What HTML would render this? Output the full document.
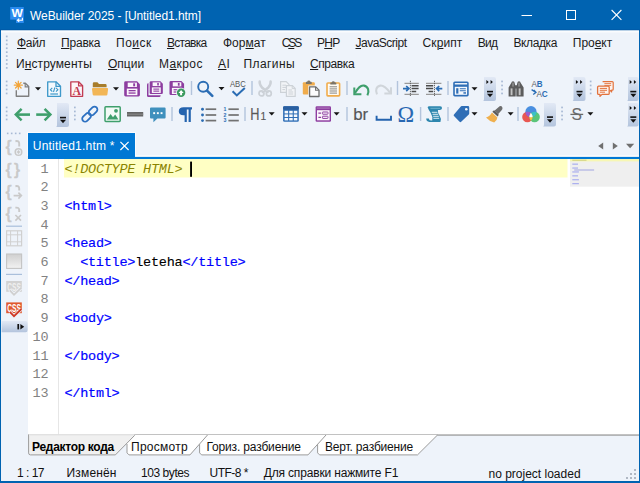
<!DOCTYPE html>
<html><head><meta charset="utf-8"><title>WeBuilder 2025 - [Untitled1.htm]</title>
<style>
html,body{margin:0;padding:0}
body{width:640px;height:483px;position:relative;overflow:hidden;background:#eef3fa}
#w{position:absolute;left:0;top:0;width:640px;height:483px;overflow:hidden}
#w div{position:absolute}
#w .t{white-space:pre;line-height:1}
#w u{text-decoration:underline;text-underline-offset:1px;text-decoration-thickness:1px}
svg{position:absolute;left:0;top:0}
</style></head><body><div id="w">
<svg width="640" height="483" viewBox="0 0 640 483">
<rect x="0" y="0" width="640" height="483" fill="#0063b1"/>
<rect x="1" y="30" width="638" height="451" fill="#eef3fa"/>
<rect x="0" y="0" width="640" height="30" fill="#0063b1"/>
<rect x="0" y="29.5" width="640" height="1" fill="#0057a3"/>
<rect x="1" y="30.5" width="638" height="2" fill="#fafcfe"/>
<rect x="27" y="132" width="109" height="24" fill="#f9fbfe"/>
<rect x="28" y="133" width="107" height="25" fill="#0078d4"/>
<rect x="135" y="155.2" width="504" height="1.8" fill="#fafcfe"/>
<rect x="28" y="156.9" width="611" height="2.1" fill="#0078d4"/>
<rect x="28" y="159" width="611" height="276" fill="#fff"/>
<rect x="58" y="159" width="1" height="276" fill="#e6e6e6"/>
<rect x="64" y="159" width="503.5" height="18.5" fill="#ffffc4"/>
<rect x="570" y="159" width="69" height="27.7" fill="#efefef"/>
<rect x="570" y="159" width="69" height="2.4" fill="#f7f7b4"/>
<rect x="190.1" y="161.6" width="1.9" height="15.2" fill="#000"/>
<defs>
<linearGradient id="ov" x1="0" y1="0" x2="0" y2="1"><stop offset="0" stop-color="#e2e9f5"/><stop offset="1" stop-color="#b3c4dd"/></linearGradient>
<linearGradient id="sq" x1="0" y1="0" x2="0" y2="1"><stop offset="0" stop-color="#cfcfcf"/><stop offset="1" stop-color="#f2f2f2"/></linearGradient>
</defs>
<rect x="5.9" y="35.60" width="1.7" height="1.7" fill="#a7b9d4"/>
<rect x="5.9" y="39.53" width="1.7" height="1.7" fill="#a7b9d4"/>
<rect x="5.9" y="43.46" width="1.7" height="1.7" fill="#a7b9d4"/>
<rect x="5.9" y="47.39" width="1.7" height="1.7" fill="#a7b9d4"/>
<rect x="5.9" y="51.32" width="1.7" height="1.7" fill="#a7b9d4"/>
<rect x="5.9" y="55.25" width="1.7" height="1.7" fill="#a7b9d4"/>
<rect x="5.9" y="59.18" width="1.7" height="1.7" fill="#a7b9d4"/>
<rect x="5.9" y="63.11" width="1.7" height="1.7" fill="#a7b9d4"/>
<rect x="5.9" y="67.04" width="1.7" height="1.7" fill="#a7b9d4"/>
<rect x="5.8" y="80.6" width="1.7" height="1.7" fill="#a7b9d4"/>
<rect x="5.8" y="84.6" width="1.7" height="1.7" fill="#a7b9d4"/>
<rect x="5.8" y="88.6" width="1.7" height="1.7" fill="#a7b9d4"/>
<rect x="5.8" y="92.6" width="1.7" height="1.7" fill="#a7b9d4"/>
<g transform="translate(14 81)"><path d="M9.3 2.3H11.4L14.7 5.6V15.2H2.3V9.3" fill="none" stroke="#808080" stroke-width="1.4" stroke-linejoin="round"/>
<path d="M11.2 2.5V5.8H14.5" fill="none" stroke="#808080" stroke-width="1.2"/>
<path d="M4.3 0.2V8.2M0.3 4.2H8.3M1.5 1.4L7.1 7M7.1 1.4L1.5 7" stroke="#f2a53a" stroke-width="1.25" stroke-linecap="round"/></g>
<path d="M35 87.2h6l-3 3.2z" fill="#151515"/>
<g transform="translate(46 81)"><path d="M1.7 0.8H10L14.5 5.3V15.3H1.7Z" fill="#f3f9fd" stroke="#3f99ca" stroke-width="1.35" stroke-linejoin="round"/>
<path d="M10 0.8V5.3H14.5" fill="none" stroke="#3c97c9" stroke-width="1.3"/>
<path d="M6.3 6.8L4.4 8.7L6.3 10.6M10 6.8L11.9 8.7L10 10.6M8.9 6.4L7.5 11" stroke="#3c97c9" stroke-width="1.1" fill="none"/>
<path d="M4.3 13H12" stroke="#3c97c9" stroke-width="1.2"/></g>
<g transform="translate(69 81)"><path d="M1.8 0.8H9.6L13.6 4.8V15.3H1.8Z" fill="#fdf6f7" stroke="#c23c52" stroke-width="1.35" stroke-linejoin="round"/>
<path d="M9.6 0.8V4.8H13.6" fill="none" stroke="#c23c52" stroke-width="1.3"/>
<text x="7.7" y="13.6" font-family="'Liberation Serif',serif" font-weight="bold" font-size="11.8" fill="#c23c52" text-anchor="middle">A</text></g>
<g transform="translate(92 81)"><path d="M0.8 2.4Q0.8 1.2 2 1.2H5.4L7 3H13.4Q14.6 3 14.6 4.2V6.2H0.8Z" fill="#a77d2b"/>
<path d="M0 7.9Q-0.1 6.9 1 6.9H15.1Q16.2 6.9 16.1 7.9L15.4 13.6Q15.3 14.6 14.2 14.6H1.9Q0.8 14.6 0.7 13.6Z" fill="#f2b656"/></g>
<path d="M113 87.2h6l-3 3.2z" fill="#151515"/>
<g transform="translate(124 81)"><g transform="scale(1.0)"><path d="M1.6 0.3H13L15.9 3.2V14Q15.9 15.4 14.5 15.4H1.6Q0.2 15.4 0.2 14V1.7Q0.2 0.3 1.6 0.3Z" fill="#8d3da0"/>
<rect x="3.7" y="1.6" width="9.2" height="4.4" fill="#fbf5fc"/><rect x="9.2" y="2.3" width="1.9" height="3" fill="#8d3da0"/>
<rect x="2.8" y="7.6" width="10.6" height="6.6" fill="#fbf5fc"/><rect x="4.6" y="9" width="7" height="1.3" fill="#8d3da0"/><rect x="4.6" y="11.4" width="7" height="1.3" fill="#8d3da0"/></g></g>
<g transform="translate(147 81)"><rect x="0" y="2.2" width="13.6" height="13.9" rx="1.4" fill="#8d3da0"/><path d="M2.4 0.2H14L15.8 2V13.4H2.4Z" fill="#eef3fa" stroke="#eef3fa" stroke-width="1.8"/><g transform="translate(2.5 0)"><g transform="scale(0.84)"><path d="M1.6 0.3H13L15.9 3.2V14Q15.9 15.4 14.5 15.4H1.6Q0.2 15.4 0.2 14V1.7Q0.2 0.3 1.6 0.3Z" fill="#8d3da0"/>
<rect x="3.7" y="1.6" width="9.2" height="4.4" fill="#fbf5fc"/><rect x="9.2" y="2.3" width="1.9" height="3" fill="#8d3da0"/>
<rect x="2.8" y="7.6" width="10.6" height="6.6" fill="#fbf5fc"/><rect x="4.6" y="9" width="7" height="1.3" fill="#8d3da0"/><rect x="4.6" y="11.4" width="7" height="1.3" fill="#8d3da0"/></g></g></g>
<g transform="translate(169.3 80.8)"><g transform="scale(0.93)"><path d="M1.6 0.3H13L15.9 3.2V14Q15.9 15.4 14.5 15.4H1.6Q0.2 15.4 0.2 14V1.7Q0.2 0.3 1.6 0.3Z" fill="#8d3da0"/>
<rect x="3.7" y="1.6" width="9.2" height="4.4" fill="#fbf5fc"/><rect x="9.2" y="2.3" width="1.9" height="3" fill="#8d3da0"/>
<rect x="2.8" y="7.6" width="10.6" height="6.6" fill="#fbf5fc"/><rect x="4.6" y="9" width="7" height="1.3" fill="#8d3da0"/><rect x="4.6" y="11.4" width="7" height="1.3" fill="#8d3da0"/></g><circle cx="11.8" cy="11.9" r="5" fill="#eef3fa"/><circle cx="11.8" cy="11.9" r="4.2" fill="#3a9a5e"/><path d="M11.8 9.2L14.4 12.1H12.8V14.4H10.8V12.1H9.2Z" fill="#fff"/></g>
<rect x="190.8" y="81" width="1.4" height="14" fill="#b3c4dc"/>
<circle cx="203.2" cy="86.7" r="5" fill="none" stroke="#2b6db4" stroke-width="1.9"/><path d="M207 90.6L212.3 95.9" stroke="#2b6db4" stroke-width="2.6" stroke-linecap="round"/>
<path d="M218.5 87h6l-3 3.2z" fill="#151515"/>
<text x="230" y="86.9" font-family="'Liberation Sans',sans-serif" font-size="8.3" fill="#555" textLength="15.8" lengthAdjust="spacingAndGlyphs">ABC</text>
<path d="M232.6 91.3L236.8 95.4L244.8 87.9" fill="none" stroke="#2b6db4" stroke-width="2.1"/>
<rect x="251.3" y="81" width="1.4" height="14" fill="#b3c4dc"/>
<g transform="translate(257 81)"><circle cx="4.5" cy="12.4" r="2.5" fill="none" stroke="#ccd1d7" stroke-width="1.7"/><circle cx="11.8" cy="12.4" r="2.5" fill="none" stroke="#ccd1d7" stroke-width="1.7"/>
<path d="M2.7 0.4Q2.2 3 5 6.5L10.6 11M13.6 0.4Q14.1 3 11.3 6.5L5.7 11" fill="none" stroke="#ccd1d7" stroke-width="2.5" stroke-linecap="round"/></g>
<g transform="translate(280 81)"><path d="M0.6 0.6H6.2L9 3.4V11.4H0.6Z" fill="#f2f4f7" stroke="#cdd2d7" stroke-width="1.2"/>
<path d="M2.4 4.2H6M2.4 6.4H7M2.4 8.6H5" stroke="#cdd2d7" stroke-width="1"/>
<path d="M6.4 4.6H12.4L15.2 7.4V15.4H6.4Z" fill="#f2f4f7" stroke="#cdd2d7" stroke-width="1.2"/>
<path d="M12.2 4.8V7.6H15M8.4 9H12M8.4 11H13.2M8.4 13H13.2" fill="none" stroke="#cdd2d7" stroke-width="1"/></g>
<g transform="translate(302.6 80.5)"><rect x="0.2" y="1.7" width="12" height="12.2" rx="1" fill="#f0ac4c"/>
<path d="M3.3 3.4V1.7Q3.3 1.2 3.8 1.2H4.6Q4.8 -0.1 6.2 -0.1Q7.6 -0.1 7.8 1.2H8.6Q9.1 1.2 9.1 1.7V3.4Z" fill="#7b7468"/>
<path d="M7 6.4H13.2L16.4 9.6V16H7Z" fill="#fcfcfc" stroke="#eef3fa" stroke-width="2.6"/>
<path d="M7 6.4H13.2L16.4 9.6V16H7Z" fill="#fcfcfc" stroke="#6d6d6d" stroke-width="1.3" stroke-linejoin="round"/>
<path d="M13 6.6V9.8H16.2" fill="none" stroke="#6d6d6d" stroke-width="1.1"/></g>
<g transform="translate(325 81)"><rect x="2" y="2" width="12.6" height="12.9" rx="0.8" fill="#fffbf3" stroke="#f0ac4c" stroke-width="1.6"/>
<path d="M5.3 3.6V2Q5.3 1.5 5.8 1.5H6.7Q6.9 0.2 8.3 0.2Q9.7 0.2 9.9 1.5H10.8Q11.3 1.5 11.3 2V3.6Z" fill="#7b7468"/>
<path d="M4.6 5.8H12M4.6 7.9H12M4.6 10H12M4.6 12.1H12" stroke="#858585" stroke-width="1"/></g>
<rect x="346.3" y="81" width="1.4" height="14" fill="#b3c4dc"/>
<path d="M367.4 95.4C369.6 91 368.2 86.4 364 85.6C360.6 85 358.4 87.4 355 93" fill="none" stroke="#3f9f6c" stroke-width="2.1"/><path d="M354.3 87.4V94.3H361.4" fill="none" stroke="#3f9f6c" stroke-width="2"/>
<path d="M377 94.4C375 90.4 376.4 86.2 380.4 85.6C383.6 85.2 386 87.4 390 92.6" fill="none" stroke="#d0d5da" stroke-width="2.1"/><path d="M391 87.2V93.6H384.4" fill="none" stroke="#d0d5da" stroke-width="2"/>
<rect x="396.8" y="81" width="1.4" height="14" fill="#b3c4dc"/>
<path d="M404.5 83.3H418.8M404.5 94.3H418.8" stroke="#9a9a9a" stroke-width="1.3"/><path d="M411.6 85.8H418.6M411.6 88.6H418.6M411.6 91.4H416.2" stroke="#4a4a4a" stroke-width="1.5"/><path d="M410.4 80.8V96.6" stroke="#5a5a5a" stroke-width="0.9" stroke-dasharray="1.2 0.8"/>
<path d="M403 88.6H408.6M406.2 86L408.9 88.6L406.2 91.2" fill="none" stroke="#2b6db4" stroke-width="1.7"/>
<path d="M426 83.3H441.4M426 94.3H441.4" stroke="#9a9a9a" stroke-width="1.3"/><path d="M426 85.8H433.2M426 88.6H433.2M428.6 91.4H433.2" stroke="#4a4a4a" stroke-width="1.5"/><path d="M434.5 80.8V96.6" stroke="#5a5a5a" stroke-width="0.9" stroke-dasharray="1.2 0.8"/>
<path d="M442.3 88.6H436.8M439.2 86L436.5 88.6L439.2 91.2" fill="none" stroke="#2b6db4" stroke-width="1.7"/>
<rect x="447.3" y="81" width="1.4" height="14" fill="#b3c4dc"/>
<g transform="translate(453 81)"><rect x="0.2" y="0.4" width="15.5" height="15" rx="1.6" fill="#2f6eb6"/>
<rect x="1.8" y="2" width="12.3" height="1.5" fill="#eaf1fa"/>
<rect x="1.8" y="5.8" width="12.3" height="8" fill="#f4f8fd"/>
<rect x="3.2" y="7.2" width="2.2" height="5.4" fill="#2f6eb6"/><path d="M6.8 7.8H12.8M6.8 9.8H12.8" stroke="#2f6eb6" stroke-width="1.1"/><rect x="10.4" y="11.2" width="2.6" height="1.5" fill="#2f6eb6"/></g>
<path d="M471.5 87.2h6l-3 3.2z" fill="#151515"/>
<path d="M484 77H494Q496 77 496 79V99Q496 101 494 101H483.2Q484 100.5 484 99Z" fill="url(#ov)"/>
<path d="M486.4 80l2.3 2l-2.3 2zM490.6 80l2.3 2l-2.3 2z" fill="#111"/>
<rect x="487" y="90.8" width="6" height="1.6" fill="#111"/>
<path d="M487 93.8h6l-3 3.4z" fill="#111"/>
<rect x="501.2" y="80.6" width="1.7" height="1.7" fill="#a7b9d4"/>
<rect x="501.2" y="84.6" width="1.7" height="1.7" fill="#a7b9d4"/>
<rect x="501.2" y="88.6" width="1.7" height="1.7" fill="#a7b9d4"/>
<rect x="501.2" y="92.6" width="1.7" height="1.7" fill="#a7b9d4"/>
<g transform="translate(508 81)"><path d="M3.4 1.8Q3.4 0.2 5 0.2Q6.6 0.2 6.6 1.8L7.2 4.2H8.8L9.4 1.8Q9.4 0.2 11 0.2Q12.6 0.2 12.6 1.8L15.6 6.6V15.4H8.3V7.4H7.7V15.4H0.6V6.6Z" fill="#5c5c5c"/>
<rect x="2.6" y="7.4" width="1.9" height="6.8" fill="#c4c4c4"/><rect x="10.7" y="7.4" width="1.9" height="6.8" fill="#c4c4c4"/><path d="M5 1.6V5.6M11 1.6V5.6" stroke="#b5b5b5" stroke-width="0.9"/></g>
<text x="531.4" y="87.2" font-family="'Liberation Sans',sans-serif" font-size="8.4" textLength="11.2" lengthAdjust="spacingAndGlyphs"><tspan fill="#606060">A</tspan><tspan fill="#2b6db4" font-weight="bold">B</tspan></text>
<text x="536.4" y="96.6" font-family="'Liberation Sans',sans-serif" font-size="8.8" textLength="11.4" lengthAdjust="spacingAndGlyphs"><tspan fill="#606060">A</tspan><tspan fill="#2b6db4" font-weight="bold">C</tspan></text>
<path d="M531.6 89.6L535.8 92.4M533.2 94.6L536 92.4L533.8 90" fill="none" stroke="#2b6db4" stroke-width="1.3"/>
<path d="M573.5 77H583.5Q585.5 77 585.5 79V99Q585.5 101 583.5 101H572.7Q573.5 100.5 573.5 99Z" fill="url(#ov)"/>
<path d="M575.9 80l2.3 2l-2.3 2zM580.1 80l2.3 2l-2.3 2z" fill="#111"/>
<rect x="576.5" y="90.8" width="6" height="1.6" fill="#111"/>
<path d="M576.5 93.8h6l-3 3.4z" fill="#111"/>
<rect x="589.8" y="80.6" width="1.7" height="1.7" fill="#a7b9d4"/>
<rect x="589.8" y="84.6" width="1.7" height="1.7" fill="#a7b9d4"/>
<rect x="589.8" y="88.6" width="1.7" height="1.7" fill="#a7b9d4"/>
<rect x="589.8" y="92.6" width="1.7" height="1.7" fill="#a7b9d4"/>
<g transform="translate(597 81)"><path d="M5.6 0.6H15.2Q16.2 0.6 16.2 1.6V8.2Q16.2 9.2 15.2 9.2H14.6V11L13 9.2" fill="#fdf3ee" stroke="#e2723d" stroke-width="1.2" stroke-linejoin="round"/>
<path d="M7.4 2.6H14.2M7.4 4.4H14.2" stroke="#e2723d" stroke-width="0.9"/>
<path d="M1.6 5.2H11.2Q12.2 5.2 12.2 6.2V12.4Q12.2 13.4 11.2 13.4H5L3 15.4V13.4H1.6Q0.6 13.4 0.6 12.4V6.2Q0.6 5.2 1.6 5.2Z" fill="#fdf3ee" stroke="#e2723d" stroke-width="1.3" stroke-linejoin="round"/>
<path d="M2.8 7.4H10M2.8 9.3H10M2.8 11.2H8" stroke="#e2723d" stroke-width="1"/></g>
<path d="M628 77H636.6Q638.6 77 638.6 79V99Q638.6 101 636.6 101H627.2Q628 100.5 628 99Z" fill="url(#ov)"/>
<path d="M629.7 80l2.3 2l-2.3 2zM633.9 80l2.3 2l-2.3 2z" fill="#111"/>
<rect x="630.3" y="90.8" width="6" height="1.6" fill="#111"/>
<path d="M630.3 93.8h6l-3 3.4z" fill="#111"/>
<rect x="5.8" y="106.6" width="1.7" height="1.7" fill="#a7b9d4"/>
<rect x="5.8" y="110.6" width="1.7" height="1.7" fill="#a7b9d4"/>
<rect x="5.8" y="114.6" width="1.7" height="1.7" fill="#a7b9d4"/>
<rect x="5.8" y="118.6" width="1.7" height="1.7" fill="#a7b9d4"/>
<path d="M16.6 114.6H30" stroke="#3f9f6c" stroke-width="2.6"/><path d="M21.6 108.8L15.8 114.6L21.6 120.4" fill="none" stroke="#3f9f6c" stroke-width="2.5"/>
<path d="M36.2 114.6H49.6" stroke="#3f9f6c" stroke-width="2.6"/><path d="M44.6 108.8L50.4 114.6L44.6 120.4" fill="none" stroke="#3f9f6c" stroke-width="2.5"/>
<path d="M57 103H67Q69 103 69 105V125Q69 127 67 127H56.2Q57 126.5 57 125Z" fill="url(#ov)"/>
<rect x="60" y="116.8" width="6" height="1.6" fill="#111"/>
<path d="M60 119.8h6l-3 3.4z" fill="#111"/>
<rect x="74" y="106.6" width="1.7" height="1.7" fill="#a7b9d4"/>
<rect x="74" y="110.6" width="1.7" height="1.7" fill="#a7b9d4"/>
<rect x="74" y="114.6" width="1.7" height="1.7" fill="#a7b9d4"/>
<rect x="74" y="118.6" width="1.7" height="1.7" fill="#a7b9d4"/>
<g fill="none" stroke="#2d71c1" stroke-width="1.8"><rect x="-5" y="-2.9" width="10" height="5.8" rx="2.9" transform="translate(86.6 117.3) rotate(-45)"/><rect x="-5" y="-2.9" width="10" height="5.8" rx="2.9" transform="translate(93 111) rotate(-45)"/></g>
<g transform="translate(104 106)"><rect x="1" y="0.8" width="15.2" height="14.6" rx="0.8" fill="#f3faf6" stroke="#3f9f6c" stroke-width="1.5"/>
<path d="M2.8 13.6L6.6 8L9 11.2L11.2 8.6L14.4 13.6Z" fill="#3f9f6c"/><circle cx="12" cy="4.8" r="1.9" fill="#3f9f6c"/></g>
<rect x="127" y="112" width="16.2" height="4.5" fill="#666"/><rect x="127" y="113.7" width="16.2" height="1" fill="#8a8a8a"/>
<path d="M151 107.6H164.6Q165.6 107.6 165.6 108.6V117.6Q165.6 118.6 164.6 118.6H157.4L153.4 122.2V118.6H151Q150 118.6 150 117.6V108.6Q150 107.6 151 107.6Z" fill="#3f90bd"/>
<rect x="153.2" y="112.2" width="1.9" height="1.9" fill="#fff"/><rect x="156.9" y="112.2" width="1.9" height="1.9" fill="#fff"/><rect x="160.6" y="112.2" width="1.9" height="1.9" fill="#fff"/>
<rect x="171.3" y="107" width="1.4" height="14" fill="#b3c4dc"/>
<path d="M183.6 107.2H192V109.4H190.8V122H188.6V109.4H186.8V122H184.6V115.2H183.6Q178.8 115.2 178.8 111.2Q178.8 107.2 183.6 107.2Z" fill="#2463ae"/>
<circle cx="202.5" cy="109.2" r="1.45" fill="#2b6db4"/><rect x="205.6" y="108.35" width="10.6" height="1.7" fill="#727272"/>
<circle cx="202.5" cy="115" r="1.45" fill="#2b6db4"/><rect x="205.6" y="114.15" width="10.6" height="1.7" fill="#727272"/>
<circle cx="202.5" cy="120.6" r="1.45" fill="#2b6db4"/><rect x="205.6" y="119.75" width="10.6" height="1.7" fill="#727272"/>
<text x="223.6" y="111" font-family="'Liberation Sans',sans-serif" font-size="5.2" font-weight="bold" fill="#2b6db4">1</text><rect x="228.4" y="108.35" width="10.4" height="1.7" fill="#727272"/>
<text x="223.6" y="116.8" font-family="'Liberation Sans',sans-serif" font-size="5.2" font-weight="bold" fill="#2b6db4">2</text><rect x="228.4" y="114.15" width="10.4" height="1.7" fill="#727272"/>
<text x="223.6" y="122.4" font-family="'Liberation Sans',sans-serif" font-size="5.2" font-weight="bold" fill="#2b6db4">3</text><rect x="228.4" y="119.75" width="10.4" height="1.7" fill="#727272"/>
<rect x="244.3" y="107" width="1.4" height="14" fill="#b3c4dc"/>
<text x="250.2" y="120" font-family="'Liberation Sans',sans-serif" font-size="16.6" fill="#585858" stroke="#585858" stroke-width="0.2" textLength="9.2" lengthAdjust="spacingAndGlyphs">H</text><text x="260.6" y="120" font-family="'Liberation Sans',sans-serif" font-size="10.2" fill="#585858" stroke="#585858" stroke-width="0.15">1</text>
<path d="M268.7 112.2h6l-3 3.2z" fill="#151515"/>
<g transform="translate(283 106)"><rect x="0.1" y="0.2" width="15.7" height="15.5" rx="1.3" fill="#2f6eb6"/><rect x="0.1" y="0.2" width="15.7" height="3.6" rx="1.3" fill="#2a5fa0"/>
<g fill="#f6f9fd"><rect x="1.6" y="4.8" width="3.5" height="2.6"/><rect x="6.2" y="4.8" width="3.5" height="2.6"/><rect x="10.8" y="4.8" width="3.5" height="2.6"/>
<rect x="1.6" y="8.4" width="3.5" height="2.6"/><rect x="6.2" y="8.4" width="3.5" height="2.6"/><rect x="10.8" y="8.4" width="3.5" height="2.6"/>
<rect x="1.6" y="12" width="3.5" height="2.4"/><rect x="6.2" y="12" width="3.5" height="2.4"/><rect x="10.8" y="12" width="3.5" height="2.4"/></g></g>
<path d="M301.5 112.2h6l-3 3.2z" fill="#151515"/>
<g transform="translate(315.4 106)"><rect x="0.2" y="0.2" width="15.4" height="15.5" rx="1.2" fill="#8d3da0"/><rect x="1.6" y="4.2" width="12.6" height="10.1" fill="#fbf6fc"/>
<rect x="1.4" y="1.6" width="13" height="0.9" fill="#b98cc4"/>
<g fill="none" stroke="#8d3da0" stroke-width="1"><rect x="7" y="6" width="5.6" height="2.2" rx="0.5"/><rect x="7" y="10.2" width="5.6" height="2.2" rx="0.5"/></g>
<path d="M3 7.1H5.6M3 11.3H5.6" stroke="#8d3da0" stroke-width="1.2"/></g>
<path d="M333.6 112.2h6l-3 3.2z" fill="#151515"/>
<rect x="346.3" y="107" width="1.4" height="14" fill="#b3c4dc"/>
<text x="353.2" y="120" font-family="'Liberation Sans',sans-serif" font-size="17" fill="#555" stroke="#555" stroke-width="0.15" textLength="15" lengthAdjust="spacingAndGlyphs">br</text>
<path d="M376.6 115.8V119.8H391V115.8" fill="none" stroke="#2463ae" stroke-width="1.9"/>
<text x="397.6" y="121.9" font-family="'Liberation Serif',serif" font-size="24" fill="#2867b2" stroke="#2867b2" stroke-width="0.12" textLength="16.6" lengthAdjust="spacingAndGlyphs">Ω</text>
<rect x="419.9" y="107" width="1.4" height="14" fill="#b3c4dc"/>
<path d="M429.2 106.3H440.2Q442.2 106.3 442 108.3Q441.8 110.1 439.8 110.1H437.9Q437.6 112.6 439.4 115.2Q441.6 118.4 440.4 121.9H429.4Q426.3 121.9 426.2 118.6H428.8L429.6 120.2L432.2 120.4Q433 116.6 430.6 112.8Q428.2 109 427.6 107.2Q428 106.3 429.2 106.3Z" fill="#2d86ae"/>
<path d="M431.8 112.3H437.4M432.6 114.3H438.2M433.2 116.3H438.8M433.4 118.3H439.2" stroke="#e4f1f7" stroke-width="0.95"/><path d="M430.4 108.3H440.2" stroke="#7fbdd6" stroke-width="0.8"/>
<rect x="447.3" y="107" width="1.4" height="14" fill="#b3c4dc"/>
<path d="M461.6 106H468Q469.2 106 469.2 107.2V113.4Q469.2 114 468.8 114.4L461.2 121.8Q460.4 122.6 459.6 121.8L454 116Q453.2 115.2 454 114.4L460.8 106.4Q461.2 106 461.6 106Z" fill="#2f6eb6"/><circle cx="466.3" cy="109.2" r="1.3" fill="#f2f6fc"/>
<path d="M471.5 112.2h6l-3 3.2z" fill="#151515"/>
<path d="M499.6 106.2Q501.6 105.6 502.4 107.4Q503 109 501.4 110.4L498 114.2L494.4 110.8Z" fill="#6e6e6e"/><path d="M494 110.2L498.8 114.8L497.6 116.4L492.4 111.8Z" fill="#5a5a5a"/>
<path d="M492 112.6L497.4 117.4Q497 120.8 494.2 122.4Q489.8 121.6 486 117.4Q489.8 116.6 492 112.6Z" fill="#efb04f"/>
<path d="M507.6 112.2h6l-3 3.2z" fill="#151515"/>
<rect x="517.3" y="107" width="1.4" height="14" fill="#b3c4dc"/>
<circle cx="531" cy="111.7" r="5.6" fill="#4a8fe0"/><circle cx="527.4" cy="117" r="5.2" fill="#e8473f" fill-opacity="0.9"/><circle cx="534.6" cy="117" r="5.2" fill="#49c06b" fill-opacity="0.9"/>
<clipPath id="cb"><circle cx="531" cy="111.7" r="5.6"/></clipPath><clipPath id="cr"><circle cx="527.4" cy="117" r="5.2"/></clipPath>
<circle cx="527.4" cy="117" r="5.2" fill="#9a5fd0" clip-path="url(#cb)"/><circle cx="534.6" cy="117" r="5.2" fill="#3cc0c8" clip-path="url(#cb)"/><circle cx="534.6" cy="117" r="5.2" fill="#f7c443" clip-path="url(#cr)"/>
<g clip-path="url(#cb)"><circle cx="534.6" cy="117" r="5.2" fill="#fff" clip-path="url(#cr)"/></g>
<path d="M544 103H554Q556 103 556 105V124.5Q556 126.5 554 126.5H543.2Q544 126.0 544 124.5Z" fill="url(#ov)"/>
<rect x="547" y="116.3" width="6" height="1.6" fill="#111"/>
<path d="M547 119.3h6l-3 3.4z" fill="#111"/>
<rect x="561.2" y="106.6" width="1.7" height="1.7" fill="#a7b9d4"/>
<rect x="561.2" y="110.6" width="1.7" height="1.7" fill="#a7b9d4"/>
<rect x="561.2" y="114.6" width="1.7" height="1.7" fill="#a7b9d4"/>
<rect x="561.2" y="118.6" width="1.7" height="1.7" fill="#a7b9d4"/>
<text x="571.4" y="120.2" font-family="'Liberation Sans',sans-serif" font-size="16.4" fill="#6a6a6a" stroke="#6a6a6a" stroke-width="0.1" textLength="10.4" lengthAdjust="spacingAndGlyphs">S</text><path d="M570.4 114.4H583.2" stroke="#6a6a6a" stroke-width="1.3"/>
<path d="M587.4 112.2h6l-3 3.2z" fill="#151515"/>
<path d="M628 103H636.6Q638.6 103 638.6 105V124.5Q638.6 126.5 636.6 126.5H627.2Q628 126.0 628 124.5Z" fill="url(#ov)"/>
<path d="M629.7 106l2.3 2l-2.3 2zM633.9 106l2.3 2l-2.3 2z" fill="#111"/>
<rect x="630.3" y="116.3" width="6" height="1.6" fill="#111"/>
<path d="M630.3 119.3h6l-3 3.4z" fill="#111"/>
<path d="M603.2 142.4V149.6L598.2 146Z" fill="#6f6f6f"/><path d="M612.8 142.4V149.6L617.8 146Z" fill="#6f6f6f"/><path d="M626 143.8H634.2L630.1 148.2Z" fill="#6f6f6f"/>
<path d="M120.4 141.8L128.6 150M128.6 141.8L120.4 150" stroke="#fff" stroke-width="1.2"/>
<path d="M521.5 15.5H532" stroke="#fff" stroke-width="1"/><rect x="566.5" y="10.5" width="9" height="9" fill="none" stroke="#fff" stroke-width="1"/><path d="M611.6 10L621.4 19.8M621.4 10L611.6 19.8" stroke="#fff" stroke-width="1.1"/>
<rect x="10.2" y="7" width="13.6" height="12.6" fill="#2b8cf0"/><rect x="16" y="19" width="7.8" height="4" fill="#2b8cf0"/>
<text x="11.4" y="16.6" font-family="'Liberation Sans',sans-serif" font-size="10.6" font-weight="bold" fill="#fff" textLength="11.4" lengthAdjust="spacingAndGlyphs">W</text>
<path d="M22.4 17.8V20.2H17.6M19.2 18.6L17.4 20.2L19.2 21.8" fill="none" stroke="#fff" stroke-width="1.1"/>
<rect x="6.9" y="132.6" width="1.6" height="1.6" fill="#a7b9d4"/>
<rect x="10.9" y="132.6" width="1.6" height="1.6" fill="#a7b9d4"/>
<rect x="14.9" y="132.6" width="1.6" height="1.6" fill="#a7b9d4"/>
<rect x="18.9" y="132.6" width="1.6" height="1.6" fill="#a7b9d4"/>
<text x="5.8" y="152.2" font-family="'Liberation Sans',sans-serif" font-size="17" fill="#c9c9c9" stroke="#c9c9c9" stroke-width="0.7">{</text>
<path d="M15.4 141.2Q19.2 140.4 19.2 143.4V146.4" fill="none" stroke="#c9c9c9" stroke-width="1.9"/><circle cx="18.5" cy="152" r="3.3" fill="none" stroke="#c9c9c9" stroke-width="1.5"/><path d="M18.5 150.2V153.8M16.7 152H20.3" stroke="#c9c9c9" stroke-width="1.3"/>
<text x="5.8" y="175.2" font-family="'Liberation Sans',sans-serif" font-size="17" fill="#c9c9c9" stroke="#c9c9c9" stroke-width="0.7">{</text>
<text x="14.2" y="175.2" font-family="'Liberation Sans',sans-serif" font-size="17" fill="#c9c9c9" stroke="#c9c9c9" stroke-width="0.7">}</text>
<text x="5.8" y="197.2" font-family="'Liberation Sans',sans-serif" font-size="17" fill="#c9c9c9" stroke="#c9c9c9" stroke-width="0.7">{</text>
<path d="M15.4 186.2Q19.2 185.4 19.2 188.4V190.4" fill="none" stroke="#c9c9c9" stroke-width="1.9"/><path d="M13.6 195.6H21M18.4 192.6L21.4 195.6L18.4 198.6" fill="none" stroke="#c9c9c9" stroke-width="1.6"/>
<text x="5.8" y="218.7" font-family="'Liberation Sans',sans-serif" font-size="17" fill="#c9c9c9" stroke="#c9c9c9" stroke-width="0.7">{</text>
<path d="M15.4 207.8Q19.2 207 19.2 210V212" fill="none" stroke="#c9c9c9" stroke-width="1.9"/><path d="M15.4 215L21 220.6M21 215L15.4 220.6" fill="none" stroke="#c9c9c9" stroke-width="1.6"/>
<rect x="6" y="225.6" width="16" height="1.2" fill="#a9bfdb"/>
<g fill="none" stroke="#d0d0d0" stroke-width="1.2"><rect x="6.6" y="230.8" width="15" height="15"/><path d="M10.6 230.8V245.8M17.6 230.8V245.8M6.6 234.8H21.6M6.6 241.8H21.6" stroke-width="1"/></g>
<rect x="6.6" y="254" width="15" height="14.4" fill="url(#sq)" stroke="#c4c4c4" stroke-width="1.1"/>
<rect x="6" y="273.8" width="16" height="1.2" fill="#a9bfdb"/>
<rect x="6.2" y="281" width="15.6" height="10.8" fill="#d2d2d2"/>
<text x="7.2" y="290.7" font-family="'Liberation Sans',sans-serif" font-size="11.4" font-weight="bold" fill="#efefef" textLength="13.6" lengthAdjust="spacingAndGlyphs">CSS</text>
<path d="M9.8 290.4L14 294.8L21.4 287.6" fill="none" stroke="#eef3fa" stroke-width="3.2"/><path d="M9.8 290.4L14 294.8L21.4 287.6" fill="none" stroke="#cfcfcf" stroke-width="1.8"/>
<rect x="6.2" y="302.4" width="15.6" height="10.8" fill="#e0592e"/>
<text x="7.2" y="312.1" font-family="'Liberation Sans',sans-serif" font-size="11.4" font-weight="bold" fill="#fff" textLength="13.6" lengthAdjust="spacingAndGlyphs">CSS</text>
<path d="M9.8 311.8L14 316.2L21.4 309" fill="none" stroke="#eef3fa" stroke-width="3.2"/><path d="M9.8 311.8L14 316.2L21.4 309" fill="none" stroke="#cf3a26" stroke-width="1.8"/>
<path d="M1.6 321H25.6Q27.6 321 27.6 323V330Q27.6 332.2 25.6 332.2H1.6Z" fill="url(#ov)"/><rect x="17.4" y="324" width="1.7" height="5.4" fill="#111"/><path d="M20.4 324V329.4L24.2 326.7Z" fill="#111"/>
<rect x="28" y="434.4" width="611" height="1.3" fill="#9a9a9a"/>
<path d="M309.6 435H437.5L417.5 454.9H319.6L317.6 452.9V443Z" fill="#fff"/>
<path d="M437.5 435L417.5 454.9H319.6L317.6 452.9V444" fill="none" stroke="#9b9b9b" stroke-width="1"/>
<path d="M191.6 435H326L308 454.9H201.6L199.6 452.9V443Z" fill="#fff"/>
<path d="M326 435L308 454.9H201.6L199.6 452.9V444" fill="none" stroke="#9b9b9b" stroke-width="1"/>
<path d="M119 435H207.5L190 454.9H129L127 452.9V443Z" fill="#fff"/>
<path d="M207.5 435L190 454.9H129L127 452.9V444" fill="none" stroke="#9b9b9b" stroke-width="1"/>
<path d="M28 435H135L115.4 454.9H30.5Q28.6 454.9 28.6 452.9Z" fill="#f0f0f0"/><path d="M135 435L115.4 454.9H30.5Q28.6 454.9 28.6 452.9V435" fill="none" stroke="#9b9b9b" stroke-width="1"/>
<rect x="29" y="434.2" width="105.4" height="1.7" fill="#e9e9e9"/>
<rect x="634" y="469" width="2" height="2" fill="#b0b8c4"/>
<rect x="630" y="473" width="2" height="2" fill="#b0b8c4"/>
<rect x="634" y="473" width="2" height="2" fill="#b0b8c4"/>
<rect x="626" y="477" width="2" height="2" fill="#b0b8c4"/>
<rect x="630" y="477" width="2" height="2" fill="#b0b8c4"/>
<rect x="634" y="477" width="2" height="2" fill="#b0b8c4"/>
<rect x="572.3" y="159.75" width="14.2" height="0.9" fill="#a0a040" fill-opacity="0.5"/>
<rect x="572.3" y="163.67" width="5.7" height="0.9" fill="#3a45f0" fill-opacity="0.5"/>
<rect x="572.3" y="167.59" width="5.7" height="0.9" fill="#3a45f0" fill-opacity="0.5"/>
<rect x="574.2" y="169.55" width="19.9" height="0.9" fill="#4a50d8" fill-opacity="0.5"/>
<rect x="572.3" y="171.51" width="6.6" height="0.9" fill="#3a45f0" fill-opacity="0.5"/>
<rect x="572.3" y="175.43" width="5.7" height="0.9" fill="#3a45f0" fill-opacity="0.5"/>
<rect x="572.3" y="179.35" width="6.6" height="0.9" fill="#3a45f0" fill-opacity="0.5"/>
<rect x="572.3" y="183.27" width="6.6" height="0.9" fill="#3a45f0" fill-opacity="0.5"/>
</svg>
<div class="t" style="left:30px;top:8.7px;font:12px 'Liberation Sans',sans-serif;letter-spacing:-0.07px;color:#fff;">WeBuilder 2025 - [Untitled1.htm]</div>
<div class="t" style="left:17px;top:36.3px;font:12px 'Liberation Sans',sans-serif;letter-spacing:-0.33px;color:#1b1b1b;"><u>Ф</u>айл</div>
<div class="t" style="left:61px;top:36.3px;font:12px 'Liberation Sans',sans-serif;letter-spacing:-0.2px;color:#1b1b1b;"><u>П</u>равка</div>
<div class="t" style="left:116px;top:36.3px;font:12px 'Liberation Sans',sans-serif;letter-spacing:0.5px;color:#1b1b1b;">По<u>и</u>ск</div>
<div class="t" style="left:167px;top:36.3px;font:12px 'Liberation Sans',sans-serif;letter-spacing:-0.75px;color:#1b1b1b;"><u>В</u>ставка</div>
<div class="t" style="left:223px;top:36.3px;font:12px 'Liberation Sans',sans-serif;letter-spacing:0px;color:#1b1b1b;">Фор<u>м</u>ат</div>
<div class="t" style="left:281.7px;top:36.3px;font:12px 'Liberation Sans',sans-serif;letter-spacing:-2.05px;color:#1b1b1b;">C<u>S</u>S</div>
<div class="t" style="left:317px;top:36.3px;font:12px 'Liberation Sans',sans-serif;letter-spacing:-0.75px;color:#1b1b1b;">P<u>H</u>P</div>
<div class="t" style="left:355.5px;top:36.3px;font:12px 'Liberation Sans',sans-serif;letter-spacing:-0.5px;color:#1b1b1b;"><u>J</u>avaScript</div>
<div class="t" style="left:422.5px;top:36.3px;font:12px 'Liberation Sans',sans-serif;letter-spacing:0.1px;color:#1b1b1b;">Ск<u>р</u>ипт</div>
<div class="t" style="left:477.8px;top:36.3px;font:12px 'Liberation Sans',sans-serif;letter-spacing:-0.7px;color:#1b1b1b;">Ви<u>д</u></div>
<div class="t" style="left:513.4px;top:36.3px;font:12px 'Liberation Sans',sans-serif;letter-spacing:-0.37px;color:#1b1b1b;">Вкладка</div>
<div class="t" style="left:572.8px;top:36.3px;font:12px 'Liberation Sans',sans-serif;letter-spacing:-0.04px;color:#1b1b1b;">Про<u>е</u>кт</div>
<div class="t" style="left:16px;top:57.3px;font:12px 'Liberation Sans',sans-serif;letter-spacing:0.1px;color:#1b1b1b;">И<u>н</u>струменты</div>
<div class="t" style="left:108px;top:57.3px;font:12px 'Liberation Sans',sans-serif;letter-spacing:0px;color:#1b1b1b;"><u>О</u>пции</div>
<div class="t" style="left:159px;top:57.3px;font:12px 'Liberation Sans',sans-serif;letter-spacing:0.4px;color:#1b1b1b;">М<u>а</u>крос</div>
<div class="t" style="left:218px;top:57.3px;font:12px 'Liberation Sans',sans-serif;letter-spacing:0.5px;color:#1b1b1b;"><u>A</u>I</div>
<div class="t" style="left:243.5px;top:57.3px;font:12px 'Liberation Sans',sans-serif;letter-spacing:0.42px;color:#1b1b1b;">Плагины</div>
<div class="t" style="left:310px;top:57.3px;font:12px 'Liberation Sans',sans-serif;letter-spacing:-0.42px;color:#1b1b1b;"><u>С</u>правка</div>
<div class="t" style="left:32.75px;top:139px;font:12px 'Liberation Sans',sans-serif;letter-spacing:0.21px;color:#fff;">Untitled1.htm *</div>
<div class="t" style="left:64.4px;top:161.5px;font:italic 13.5px 'Liberation Mono',monospace;letter-spacing:-0.230px;color:#8a8400;-webkit-text-stroke:0px #8a8400">&lt;!DOCTYPE HTML&gt;</div>
<div class="t" style="left:64.4px;top:198.9px;font:13.5px 'Liberation Mono',monospace;letter-spacing:-0.230px;color:#0000ff;-webkit-text-stroke:0.18px #0000ff">&lt;html&gt;</div>
<div class="t" style="left:64.4px;top:236.3px;font:13.5px 'Liberation Mono',monospace;letter-spacing:-0.230px;color:#0000ff;-webkit-text-stroke:0.18px #0000ff">&lt;head&gt;</div>
<div class="t" style="left:80.14px;top:255px;font:13.5px 'Liberation Mono',monospace;letter-spacing:-0.230px;color:#0000ff;-webkit-text-stroke:0.18px #0000ff">&lt;title&gt;<span style="color:#000;-webkit-text-stroke:0.1px #000">leteha</span>&lt;/title&gt;</div>
<div class="t" style="left:64.4px;top:273.7px;font:13.5px 'Liberation Mono',monospace;letter-spacing:-0.230px;color:#0000ff;-webkit-text-stroke:0.18px #0000ff">&lt;/head&gt;</div>
<div class="t" style="left:64.4px;top:311.1px;font:13.5px 'Liberation Mono',monospace;letter-spacing:-0.230px;color:#0000ff;-webkit-text-stroke:0.18px #0000ff">&lt;body&gt;</div>
<div class="t" style="left:64.4px;top:348.5px;font:13.5px 'Liberation Mono',monospace;letter-spacing:-0.230px;color:#0000ff;-webkit-text-stroke:0.18px #0000ff">&lt;/body&gt;</div>
<div class="t" style="left:64.4px;top:385.9px;font:13.5px 'Liberation Mono',monospace;letter-spacing:-0.230px;color:#0000ff;-webkit-text-stroke:0.18px #0000ff">&lt;/html&gt;</div>
<div class="t" style="left:20px;width:28.6px;text-align:right;top:161.5px;font:13.5px 'Liberation Mono',monospace;color:#828282">1</div>
<div class="t" style="left:20px;width:28.6px;text-align:right;top:180.2px;font:13.5px 'Liberation Mono',monospace;color:#828282">2</div>
<div class="t" style="left:20px;width:28.6px;text-align:right;top:198.9px;font:13.5px 'Liberation Mono',monospace;color:#828282">3</div>
<div class="t" style="left:20px;width:28.6px;text-align:right;top:217.6px;font:13.5px 'Liberation Mono',monospace;color:#828282">4</div>
<div class="t" style="left:20px;width:28.6px;text-align:right;top:236.3px;font:13.5px 'Liberation Mono',monospace;color:#828282">5</div>
<div class="t" style="left:20px;width:28.6px;text-align:right;top:255px;font:13.5px 'Liberation Mono',monospace;color:#828282">6</div>
<div class="t" style="left:20px;width:28.6px;text-align:right;top:273.7px;font:13.5px 'Liberation Mono',monospace;color:#828282">7</div>
<div class="t" style="left:20px;width:28.6px;text-align:right;top:292.4px;font:13.5px 'Liberation Mono',monospace;color:#828282">8</div>
<div class="t" style="left:20px;width:28.6px;text-align:right;top:311.1px;font:13.5px 'Liberation Mono',monospace;color:#828282">9</div>
<div class="t" style="left:20px;width:28.6px;text-align:right;top:329.8px;font:13.5px 'Liberation Mono',monospace;color:#828282">10</div>
<div class="t" style="left:20px;width:28.6px;text-align:right;top:348.5px;font:13.5px 'Liberation Mono',monospace;color:#828282">11</div>
<div class="t" style="left:20px;width:28.6px;text-align:right;top:367.2px;font:13.5px 'Liberation Mono',monospace;color:#828282">12</div>
<div class="t" style="left:20px;width:28.6px;text-align:right;top:385.9px;font:13.5px 'Liberation Mono',monospace;color:#828282">13</div>
<div class="t" style="left:32px;top:439.5px;font:bold 12px 'Liberation Sans',sans-serif;letter-spacing:-0.29px;color:#000;">Редактор кода</div>
<div class="t" style="left:131px;top:439.5px;font:12px 'Liberation Sans',sans-serif;letter-spacing:0.28px;color:#111;">Просмотр</div>
<div class="t" style="left:206.5px;top:439.5px;font:12px 'Liberation Sans',sans-serif;letter-spacing:-0.16px;color:#111;">Гориз. разбиение</div>
<div class="t" style="left:325px;top:439.5px;font:12px 'Liberation Sans',sans-serif;letter-spacing:-0.18px;color:#111;">Верт. разбиение</div>
<div class="t" style="left:17px;top:466px;font:12px 'Liberation Sans',sans-serif;letter-spacing:-0.5px;color:#111;">1 : 17</div>
<div class="t" style="left:66.5px;top:466px;font:12px 'Liberation Sans',sans-serif;letter-spacing:0.17px;color:#111;">Изменён</div>
<div class="t" style="left:141px;top:466px;font:12px 'Liberation Sans',sans-serif;letter-spacing:-0.44px;color:#111;">103 bytes</div>
<div class="t" style="left:209.5px;top:466px;font:12px 'Liberation Sans',sans-serif;letter-spacing:-0.5px;color:#111;">UTF-8 *</div>
<div class="t" style="left:263.75px;top:466px;font:12px 'Liberation Sans',sans-serif;letter-spacing:-0.17px;color:#111;">Для справки нажмите F1</div>
<div class="t" style="left:488.5px;top:467px;font:12px 'Liberation Sans',sans-serif;letter-spacing:0px;color:#111;">no project loaded</div>
</div></body></html>
